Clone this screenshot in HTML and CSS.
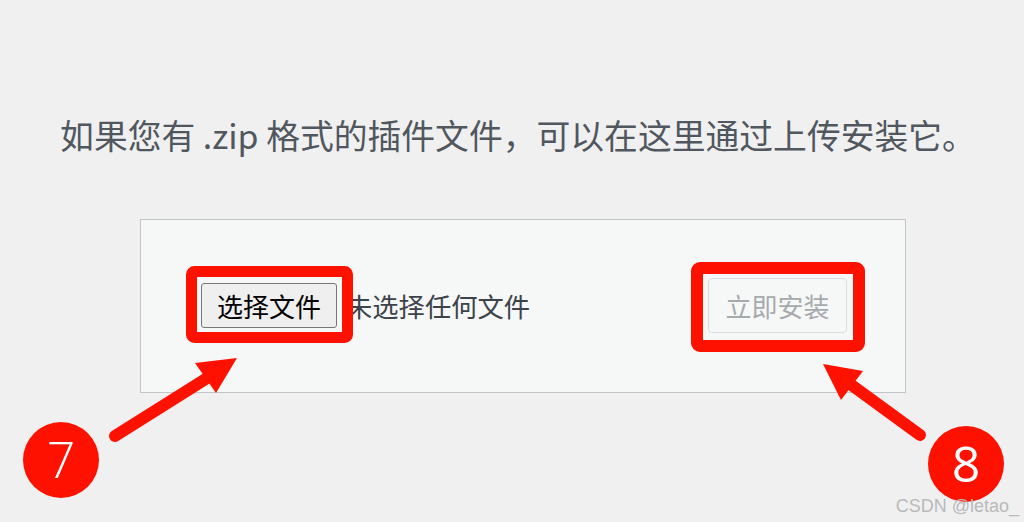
FILE: index.html
```html
<!DOCTYPE html>
<html lang="zh-CN">
<head>
<meta charset="utf-8">
<title>上传插件</title>
<link rel="stylesheet" href="styles.css">
</head>
<body>
<div class="page">
  <p class="install-help">如果您有 .zip 格式的插件文件，可以在这里通过上传安装它。</p>
  <form class="upload-form">
    <div class="file-field">
      <span class="file-btn">选择文件</span>
      <span class="file-name">未选择任何文件</span>
    </div>
    <span class="install-btn">立即安装</span>
  </form>
</div>
<svg class="annotations" width="1024" height="522" viewBox="0 0 1024 522" xmlns="http://www.w3.org/2000/svg">
  <rect x="191.5" y="271.5" width="156" height="66" rx="3" fill="none" stroke="#ff1100" stroke-width="11"/>
  <rect x="697" y="268" width="162" height="78" rx="3" fill="none" stroke="#ff1100" stroke-width="12"/>
  <line x1="115" y1="436" x2="212" y2="375" stroke="#ff1100" stroke-width="12" stroke-linecap="round"/>
  <polygon points="237,358 195,363 216,393" fill="#ff1100"/>
  <line x1="920" y1="435" x2="846" y2="381" stroke="#ff1100" stroke-width="12" stroke-linecap="round"/>
  <polygon points="823,364 863,371 841,400" fill="#ff1100"/>
  <circle cx="61" cy="460" r="38" fill="#ff1100"/>
  <circle cx="966" cy="464" r="38" fill="#ff1100"/>
  <text x="61" y="478" class="num num-light" text-anchor="middle">7</text>
  <text x="966" y="482" class="num" text-anchor="middle">8</text>
</svg>
<div class="watermark">CSDN @letao_</div>
</body>
</html>
```
FILE: styles.css
```css
html, body {
  margin: 0;
  padding: 0;
}
body {
  width: 1024px;
  height: 522px;
  background: #f0f0f1;
  overflow: hidden;
  position: relative;
  font-family: "Noto Sans CJK SC", "Noto Sans", sans-serif;
}
.page {
  padding-top: 115px;
}
.install-help {
  margin: 0;
  padding-left: 12px;
  text-align: center;
  font-size: 33.8px;
  line-height: 40px;
  color: #50575e;
  white-space: nowrap;
}
.upload-form {
  margin: 64px 0 0 140px;
  width: 766px;
  box-sizing: border-box;
  background: #f6f7f7;
  border: 1px solid #c3c4c7;
  padding: 58px 58px 59px 60px;
  display: flex;
  align-items: center;
  justify-content: space-between;
}
.file-field {
  display: flex;
  align-items: center;
}
.file-btn {
  box-sizing: border-box;
  height: 45px;
  width: 136px;
  display: flex;
  align-items: center;
  justify-content: center;
  background: #efefef;
  border: 1px solid #767676;
  border-radius: 3px;
  color: #000;
  font-size: 26px;
}
.file-name {
  margin-left: 9px;
  font-size: 26.3px;
  color: #3c434a;
}
.install-btn {
  box-sizing: border-box;
  height: 55px;
  width: 139px;
  display: flex;
  align-items: center;
  justify-content: center;
  background: #f6f7f7;
  border: 1px solid #dcdcde;
  border-radius: 4px;
  color: #a7aaad;
  font-size: 26px;
}
.annotations {
  position: absolute;
  left: 0;
  top: 0;
}
.num {
  font-family: "Open Sans", "Liberation Sans", sans-serif;
  font-size: 50px;
  fill: #ffffff;
}
.num-light {
  font-weight: 300;
}
.watermark {
  position: absolute;
  right: 5px;
  bottom: 6px;
  font-family: "Liberation Sans", Arial, sans-serif;
  font-size: 18px;
  line-height: 20px;
  color: #b9b9b9;
}
```
